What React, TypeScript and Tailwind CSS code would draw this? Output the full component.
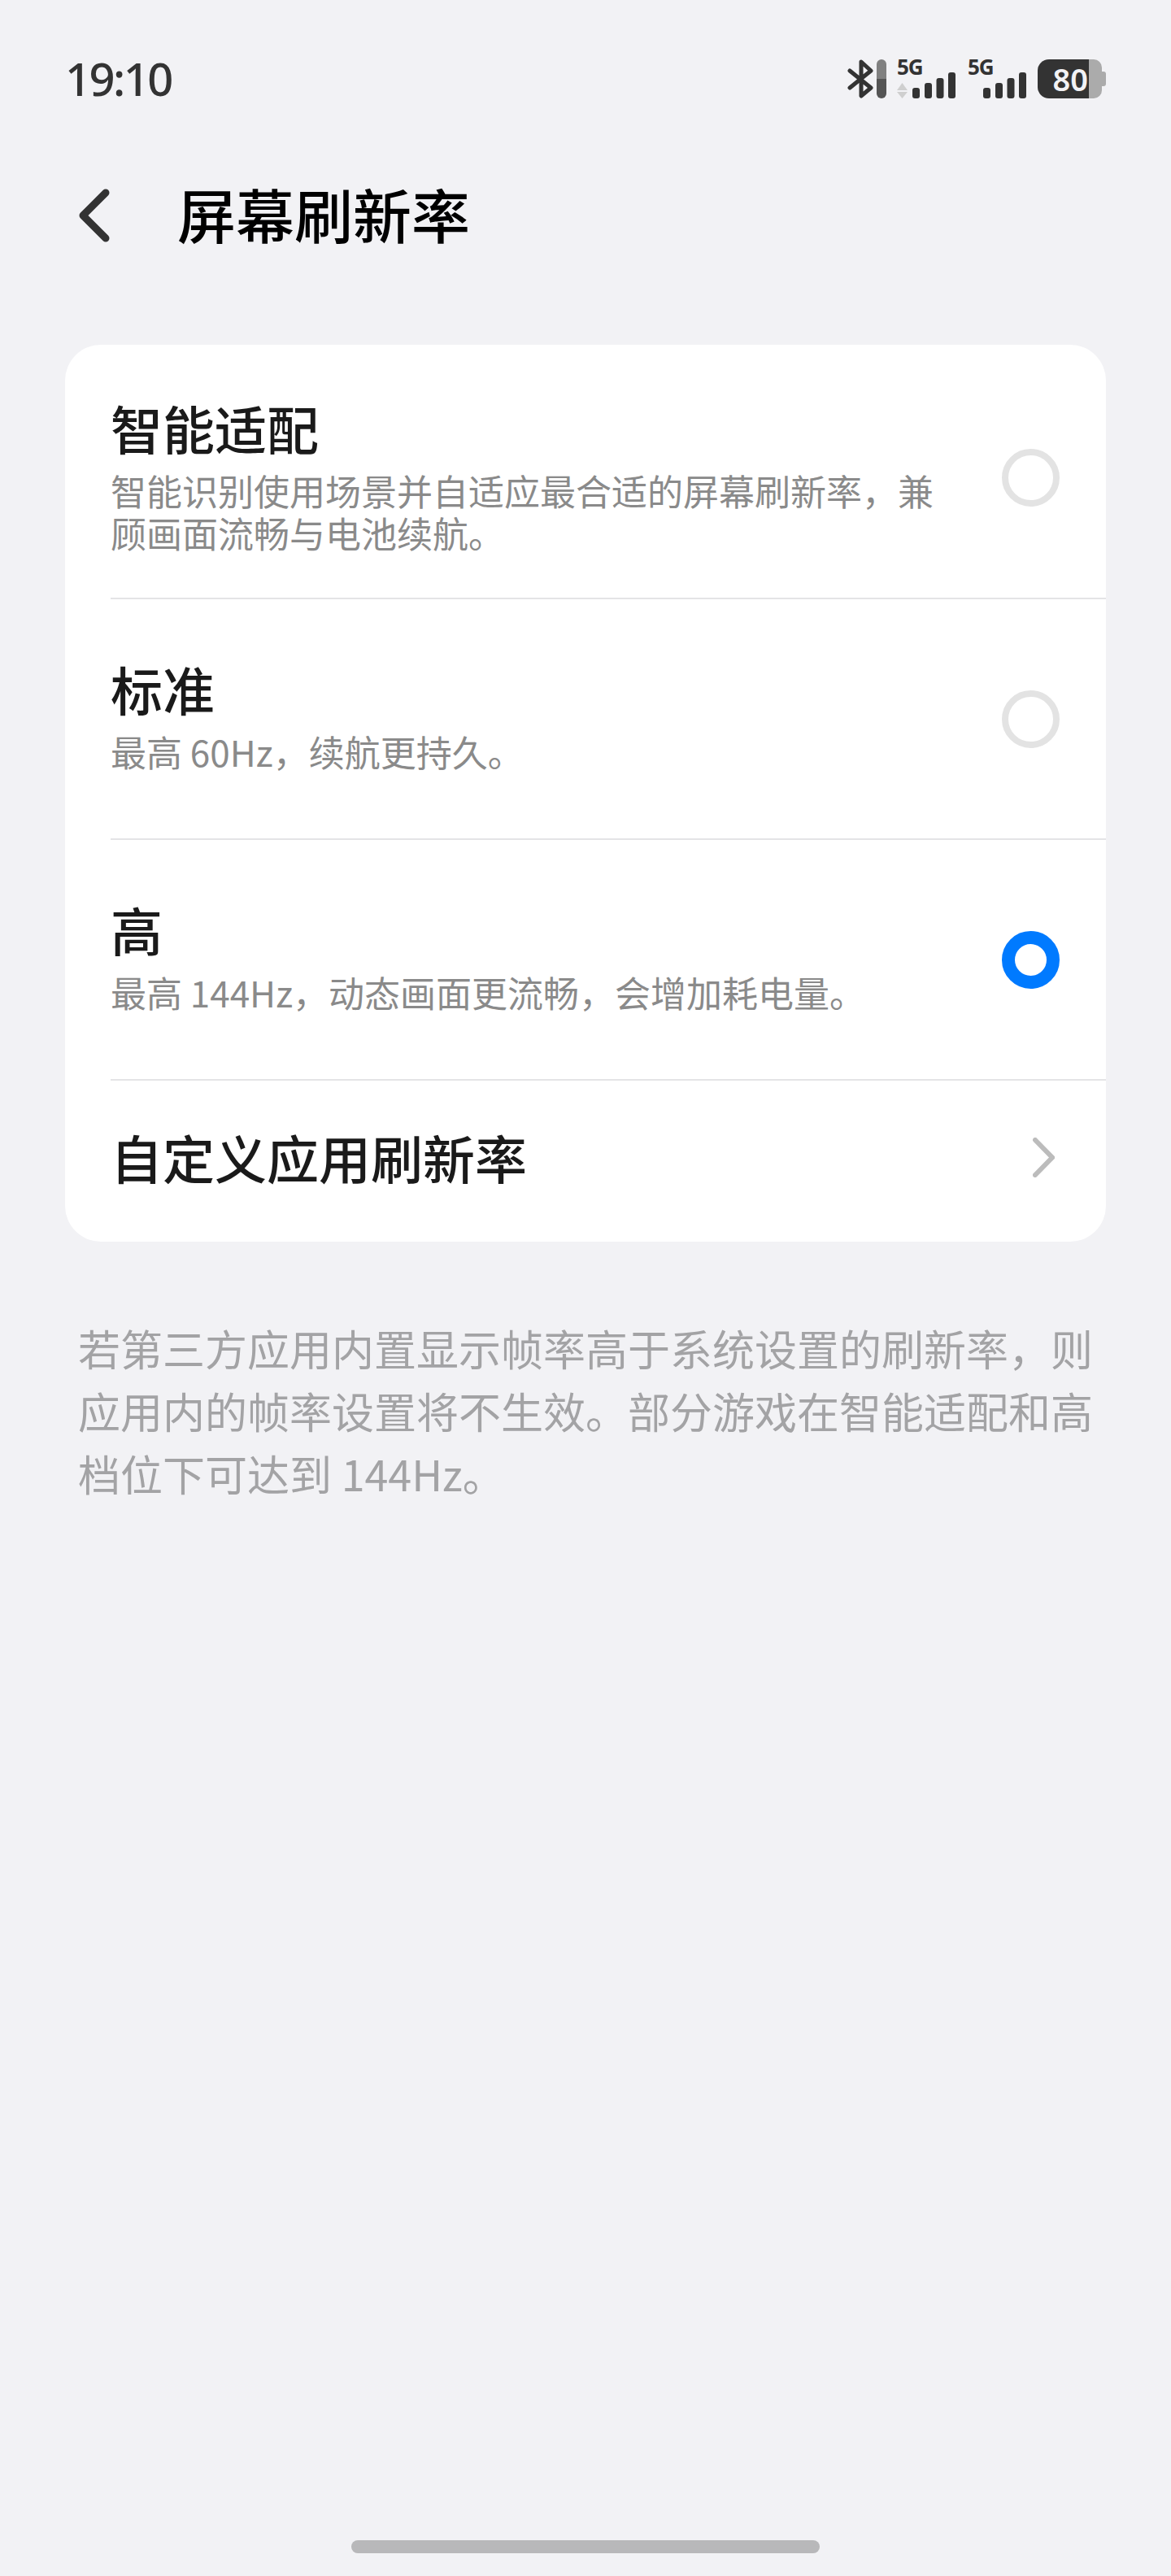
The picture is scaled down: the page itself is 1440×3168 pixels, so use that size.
const FONT = "font-['Noto_Sans_CJK_SC','Noto_Sans',sans-serif]";

function Signal({ arrows = false }: { arrows?: boolean }) {
    return (
        <div className="flex flex-col items-start w-[72px] h-[48px]">
            <span className="font-['Noto_Sans',sans-serif] text-[26px] leading-[19px] font-bold text-[#333333] tracking-[-1px]">5G</span>
            <svg width="72" height="33" viewBox="0 0 72 33" className="-mt-[4px]">
                {arrows && (
                    <g fill="#cfcfcf">
                        <path d="M6.5 14 L13 23 L0 23 Z" />
                        <path d="M0 25 L13 25 L6.5 33 Z" />
                    </g>
                )}
                <g fill="#333333">
                    <rect x="19" y="20" width="9" height="13" rx="3" />
                    <rect x="34" y="14" width="9" height="19" rx="3" />
                    <rect x="48.5" y="8" width="9" height="25" rx="3" />
                    <rect x="63" y="1" width="9" height="32" rx="3" />
                </g>
            </svg>
        </div>
    );
}

function Option({ title, desc, selected = false, tall = false }: { title: string; desc: string[]; selected?: boolean; tall?: boolean }) {
    return (
        <div className={`flex items-center justify-between pl-[56px] pr-[57px] ${tall ? 'h-[311px] pt-[16px]' : 'h-[294px]'}`}>
            <div className={`flex flex-col ${tall ? 'mb-[12px]' : 'mb-[14px]'}`}>
                <div className="text-[64px] leading-[84px] text-[#1a1a1a] font-medium">{title}</div>
                <div className="mt-[10px] text-[44px] leading-[52px] text-[#8a8a8a]">
                    {desc.map((d) => <div key={d} className="whitespace-nowrap">{d}</div>)}
                </div>
            </div>
            {selected ? (
                <div className="w-[71px] h-[71px] rounded-full border-[16px] border-[#007aff] bg-white shrink-0" />
            ) : (
                <div className="w-[71px] h-[71px] rounded-full border-[8px] border-[#e3e3e3] bg-white shrink-0" />
            )}
        </div>
    );
}

export default function App() {
    return (
        <div className={`w-[1440px] h-[3168px] bg-[#f2f2f5] flex flex-col ${FONT}`}>
            {/* Status bar */}
            <div className="h-[194px] pl-[80px] pr-[80px] pt-[64px] flex items-start justify-between">
                <span className="font-['Noto_Sans',sans-serif] text-[56px] leading-[64px] font-medium text-[#333333] tracking-[-2.5px]">19:10</span>
                <div className="flex items-center mt-[9px]">
                    <svg width="32" height="48" viewBox="0 0 32 48" fill="none" stroke="#333333" strokeWidth="5" strokeLinecap="round" strokeLinejoin="round">
                        <path d="M3 14 L29 35 L17 45 L17 3 L29 14 L3 35" />
                    </svg>
                    <div className="ml-[4px] w-[12px] h-[48px] rounded-full overflow-hidden flex flex-col">
                        <div className="h-[24px] bg-[#808080]" />
                        <div className="h-[24px] bg-[#555555]" />
                    </div>
                    <div className="ml-[13px]"><Signal arrows /></div>
                    <div className="ml-[15px]"><Signal /></div>
                    <div className="ml-[14px] flex items-center">
                        <div className="w-[63px] h-[48px] bg-[#333333] rounded-l-[14px] flex items-center justify-end pr-[1px]">
                            <span className="font-['Noto_Sans',sans-serif] text-[38px] leading-[48px] font-semibold text-[#f2f2f5]">80</span>
                        </div>
                        <div className="w-[16px] h-[48px] bg-[#ababab] rounded-r-[10px]" />
                        <div className="w-[5px] h-[18px] bg-[#ababab] rounded-r-[3px]" />
                    </div>
                </div>
            </div>

            {/* Header */}
            <div className="h-[146px] pl-[80px] flex items-start">
                <svg width="48" height="72" viewBox="0 0 48 72" fill="none" stroke="#333333" strokeWidth="9" strokeLinecap="round" strokeLinejoin="round" className="mt-[34px] ml-[14px]">
                    <path d="M36 9 L8 37 L36 65" />
                </svg>
                <h1 className="ml-[76px] mt-[28px] text-[72px] leading-[80px] font-medium text-black whitespace-nowrap">屏幕刷新率</h1>
            </div>

            {/* Card */}
            <div className="mx-[80px] mt-[84px] bg-white rounded-[44px] overflow-hidden">
                <Option tall title="智能适配" desc={["智能识别使用场景并自适应最合适的屏幕刷新率，兼", "顾画面流畅与电池续航。"]} />
                <div className="ml-[56px] h-[2px] bg-[#e4e4e6]" />
                <Option title="标准" desc={["最高 60Hz，续航更持久。"]} />
                <div className="ml-[56px] h-[2px] bg-[#e4e4e6]" />
                <Option selected title="高" desc={["最高 144Hz，动态画面更流畅，会增加耗电量。"]} />
                <div className="ml-[56px] h-[2px] bg-[#e4e4e6]" />
                <div className="h-[198px] pl-[56px] pr-[63px] pb-[10px] flex items-center justify-between">
                    <span className="mb-[3px] text-[64px] leading-[84px] text-[#1a1a1a] font-medium">自定义应用刷新率</span>
                    <svg width="27" height="49" viewBox="0 0 27 49" fill="none" stroke="#bcbcbc" strokeWidth="6" strokeLinecap="round">
                        <path d="M3 3 L24 24.5 L3 46" />
                    </svg>
                </div>
            </div>

            {/* Footnote */}
            <div className="mx-[96px] mt-[92px] text-[52px] leading-[77px] text-[#a3a3a5]">
                <div className="whitespace-nowrap">若第三方应用内置显示帧率高于系统设置的刷新率，则</div>
                <div className="whitespace-nowrap">应用内的帧率设置将不生效。部分游戏在智能适配和高</div>
                <div className="whitespace-nowrap">档位下可达到 144Hz。</div>
            </div>

            {/* Home indicator */}
            <div className="mt-auto mb-[28px] mx-auto w-[576px] h-[16px] rounded-full bg-[#b8b8ba]" />
        </div>
    );
}
